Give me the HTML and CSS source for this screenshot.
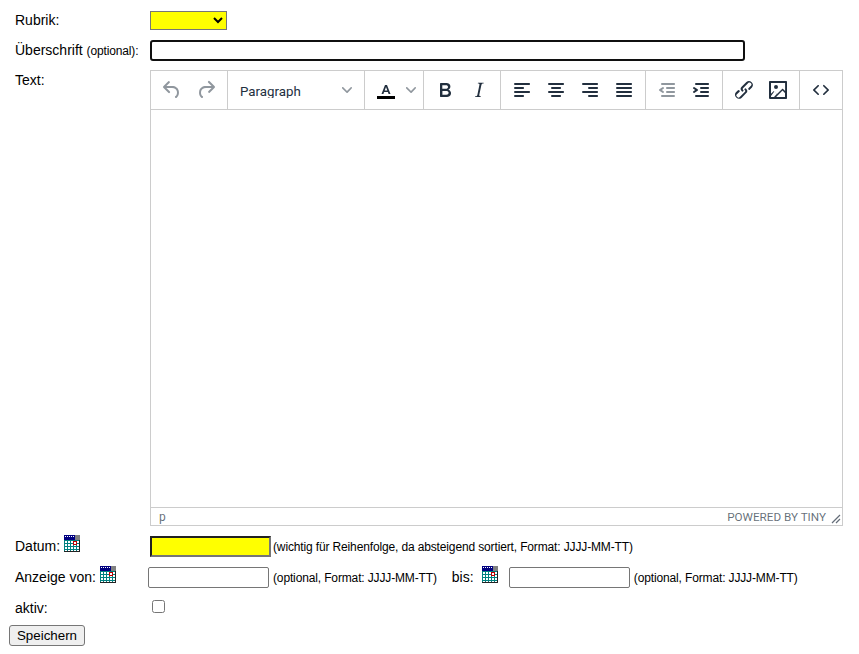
FILE: index.html
```html
<!DOCTYPE html>
<html lang="de">
<head>
<meta charset="utf-8">
<title>Artikel bearbeiten</title>
<link rel="stylesheet" href="styles.css">
</head>
<body>
<svg class="defs" width="0" height="0" aria-hidden="true">
  <symbol id="cal" viewBox="0 0 16 17" shape-rendering="crispEdges">
    <rect x="0" y="0" width="16" height="17" fill="#008080"/>
    <rect x="0" y="0" width="16" height="5" fill="#000080"/>
    <rect x="11" y="0" width="5" height="5" fill="#808080"/>
    <path d="M1 1h1v1H1zM3 1h1v1H3zM5 1h1v1H5zM7 1h1v1H7zM9 1h1v1H9z" fill="#fff"/>
    <path d="M1 6h2v2H1zM4 6h2v2H4zM7 6h2v2H7zM10 6h2v2h-2zM13 6h2v2h-2zM1 9h2v2H1zM4 9h2v2H4zM7 9h2v2H7zM10 9h2v2h-2zM13 9h2v2h-2zM1 12h2v2H1zM4 12h2v2H4zM7 12h2v2H7zM10 12h2v2h-2zM13 12h2v2h-2zM1 15h2v1H1zM4 15h2v1H4zM7 15h2v1H7zM10 15h2v1h-2zM13 15h2v1h-2z" fill="#fff"/>
    <path d="M9 6h4v4H9z" fill="#c00000"/>
    <path d="M10 7h2v2h-2z" fill="#fff"/>
    <path d="M15 5h1v12h-1zM0 16h16v1H0z" fill="#222"/>
  </symbol>
</svg>
<form class="form">
  <div class="row">
    <label class="label">Rubrik:</label>
    <select class="select"><option></option></select>
  </div>
  <div class="row">
    <label class="label">Überschrift <small class="small">(optional):</small></label>
    <input class="input-title" type="text">
  </div>
  <div class="row row-editor">
    <label class="label label-top">Text:</label>
    <div class="editor">
      <div class="toolbar">
        <div class="group">
          <span class="btn off"><svg viewBox="0 0 24 24"><path d="M6.4 8H12c3.7 0 6.2 2 6.8 5.1.6 2.7-.4 5.6-2.3 6.8a1 1 0 0 1-1-1.8c1.1-.6 1.8-2.7 1.4-4.6-.5-2.1-2.1-3.5-4.9-3.5H6.4l3.3 3.3a1 1 0 1 1-1.4 1.4l-5-5a1 1 0 0 1 0-1.4l5-5a1 1 0 0 1 1.4 1.4L6.4 8z"/></svg></span>
          <span class="btn off"><svg viewBox="0 0 24 24"><path d="M17.6 10H12c-2.8 0-4.4 1.4-4.9 3.5-.4 2 .3 4 1.4 4.6a1 1 0 1 1-1 1.8c-2-1.2-2.9-4.1-2.3-6.8.6-3 3-5.1 6.8-5.1h5.6l-3.3-3.3a1 1 0 1 1 1.4-1.4l5 5a1 1 0 0 1 0 1.4l-5 5a1 1 0 0 1-1.4-1.4l3.3-3.3z"/></svg></span>
        </div>
        <div class="group">
          <span class="format"><span class="format-text">Paragraph</span><svg class="chev" viewBox="0 0 10 10"><path d="M8.7 2.2c.3-.3.8-.3 1 0 .4.4.4.9 0 1.2L5.7 7.8c-.3.3-.9.3-1.2 0L.2 3.4a.8.8 0 0 1 0-1.2c.3-.3.8-.3 1.1 0L5 6l3.7-3.8z"/></svg></span>
        </div>
        <div class="group">
          <span class="split"><svg viewBox="0 0 24 24"><path fill-rule="evenodd" d="M7.5 16 11 7h2l3.5 9h-1.9l-.7-2h-3.8l-.7 2H7.5zm3.2-3.6h2.6L12 8.9l-1.3 3.5z"/><path class="black" d="M3 18h18v3H3z"/></svg><svg class="chev" viewBox="0 0 10 10"><path d="M8.7 2.2c.3-.3.8-.3 1 0 .4.4.4.9 0 1.2L5.7 7.8c-.3.3-.9.3-1.2 0L.2 3.4a.8.8 0 0 1 0-1.2c.3-.3.8-.3 1.1 0L5 6l3.7-3.8z"/></svg></span>
        </div>
        <div class="group">
          <span class="btn"><svg viewBox="0 0 24 24"><path d="M7.8 19c-.3 0-.5 0-.6-.2l-.2-.5V5.7c0-.2 0-.4.2-.5l.6-.2h5c1.5 0 2.7.3 3.5 1 .7.6 1.1 1.4 1.1 2.5a3 3 0 0 1-.6 1.9c-.4.6-1 1-1.6 1.2.4.1.9.3 1.3.6s.8.7 1 1.2c.4.4.5 1 .5 1.6 0 1.3-.4 2.3-1.3 3-.8.7-2.1 1-3.8 1H7.8zm5-8.3c.6 0 1.2-.1 1.6-.5.4-.3.6-.7.6-1.3 0-1.1-.8-1.7-2.3-1.7H9.3v3.5h3.4zm.5 6c.7 0 1.3-.1 1.7-.4.4-.4.6-.9.6-1.5s-.2-1-.7-1.4c-.4-.3-1-.4-2-.4H9.4v3.8h4z"/></svg></span>
          <span class="btn"><svg viewBox="0 0 24 24"><path d="M16.7 4.7l-.1.9h-.3c-.6 0-1 0-1.4.3-.3.3-.4.6-.5 1.1l-2.1 9.8v.6c0 .5.4.8 1.4.8h.2l-.2.8H8l.2-.8h.2c1.1 0 1.8-.5 2-1.5l2-9.8.1-.5c0-.6-.4-.8-1.4-.8h-.3l.2-.9h5.8z"/></svg></span>
        </div>
        <div class="group">
          <span class="btn"><svg viewBox="0 0 24 24"><path d="M5 5h14c.6 0 1 .4 1 1s-.4 1-1 1H5a1 1 0 1 1 0-2zm0 4h8c.6 0 1 .4 1 1s-.4 1-1 1H5a1 1 0 1 1 0-2zm0 8h8c.6 0 1 .4 1 1s-.4 1-1 1H5a1 1 0 0 1 0-2zm0-4h14c.6 0 1 .4 1 1s-.4 1-1 1H5a1 1 0 0 1 0-2z"/></svg></span>
          <span class="btn"><svg viewBox="0 0 24 24"><path d="M5 5h14c.6 0 1 .4 1 1s-.4 1-1 1H5a1 1 0 1 1 0-2zm3 4h8c.6 0 1 .4 1 1s-.4 1-1 1H8a1 1 0 1 1 0-2zm0 8h8c.6 0 1 .4 1 1s-.4 1-1 1H8a1 1 0 0 1 0-2zm-3-4h14c.6 0 1 .4 1 1s-.4 1-1 1H5a1 1 0 0 1 0-2z"/></svg></span>
          <span class="btn"><svg viewBox="0 0 24 24"><path d="M5 5h14c.6 0 1 .4 1 1s-.4 1-1 1H5a1 1 0 1 1 0-2zm6 4h8c.6 0 1 .4 1 1s-.4 1-1 1h-8a1 1 0 0 1 0-2zm0 8h8c.6 0 1 .4 1 1s-.4 1-1 1h-8a1 1 0 0 1 0-2zm-6-4h14c.6 0 1 .4 1 1s-.4 1-1 1H5a1 1 0 0 1 0-2z"/></svg></span>
          <span class="btn"><svg viewBox="0 0 24 24"><path d="M5 5h14c.6 0 1 .4 1 1s-.4 1-1 1H5a1 1 0 1 1 0-2zm0 4h14c.6 0 1 .4 1 1s-.4 1-1 1H5a1 1 0 1 1 0-2zm0 4h14c.6 0 1 .4 1 1s-.4 1-1 1H5a1 1 0 0 1 0-2zm0 4h14c.6 0 1 .4 1 1s-.4 1-1 1H5a1 1 0 0 1 0-2z"/></svg></span>
        </div>
        <div class="group">
          <span class="btn off"><svg viewBox="0 0 24 24"><path d="M7 5h12c.6 0 1 .4 1 1s-.4 1-1 1H7a1 1 0 1 1 0-2zm5 4h7c.6 0 1 .4 1 1s-.4 1-1 1h-7a1 1 0 0 1 0-2zm0 4h7c.6 0 1 .4 1 1s-.4 1-1 1h-7a1 1 0 0 1 0-2zm-5 4h12a1 1 0 0 1 0 2H7a1 1 0 0 1 0-2zm1.6-3.8a1 1 0 0 1-1.2 1.6l-3-2a1 1 0 0 1 0-1.6l3-2a1 1 0 0 1 1.2 1.6L6.8 12l1.8 1.2z"/></svg></span>
          <span class="btn"><svg viewBox="0 0 24 24"><path d="M7 5h12c.6 0 1 .4 1 1s-.4 1-1 1H7a1 1 0 1 1 0-2zm5 4h7c.6 0 1 .4 1 1s-.4 1-1 1h-7a1 1 0 0 1 0-2zm0 4h7c.6 0 1 .4 1 1s-.4 1-1 1h-7a1 1 0 0 1 0-2zm-5 4h12a1 1 0 0 1 0 2H7a1 1 0 0 1 0-2zm-2.6-3.8L6.2 12l-1.8-1.2a1 1 0 0 1 1.2-1.6l3 2a1 1 0 0 1 0 1.6l-3 2a1 1 0 1 1-1.2-1.6z"/></svg></span>
        </div>
        <div class="group">
          <span class="btn"><svg viewBox="0 0 24 24"><path d="M6.2 12.3a1 1 0 0 1 1.4 1.4l-2.1 2a2 2 0 1 0 2.7 2.8l4.8-4.8a1 1 0 0 0 0-1.4 1 1 0 1 1 1.3-1.4 3 3 0 0 1 0 4.2l-4.8 4.8a4 4 0 0 1-5.6-5.6l2.1-2zm11.6-.6a1 1 0 0 1-1.4-1.4l2-2a2 2 0 1 0-2.6-2.8L11 10.3a1 1 0 0 0 0 1.4A1 1 0 1 1 9.6 13a3 3 0 0 1 0-4.2l4.8-4.8a4 4 0 0 1 5.6 5.6l-2.1 2z"/></svg></span>
          <span class="btn"><svg viewBox="0 0 24 24"><path d="M5 15.7l2.3-2.2c.3-.3.7-.3 1 0L11 16l5.1-5c.3-.4.8-.4 1 0l2 1.9V5H5v10.7zM5 18V19h3l2.8-2.9-2.5-2.5L5 18zm14-3l-2.5-2.4-6.4 6.5H19v-4zM4 3h16c.6 0 1 .4 1 1v16c0 .6-.4 1-1 1H4a1 1 0 0 1-1-1V4c0-.6.4-1 1-1zm6 8a2 2 0 1 0 0-4 2 2 0 0 0 0 4z" fill-rule="evenodd"/></svg></span>
        </div>
        <div class="group group-last">
          <span class="btn"><svg viewBox="0 0 24 24"><path d="M9.8 15.7c.3.3.3.8 0 1-.3.4-.9.4-1.2 0l-4.4-4.1a.8.8 0 0 1 0-1.2l4.4-4.2c.3-.3.9-.3 1.2 0 .3.3.3.8 0 1.1L6 12l3.8 3.7zM14.2 15.7c-.3.3-.3.8 0 1 .4.4.9.4 1.2 0l4.4-4.1c.3-.3.3-.9 0-1.2l-4.4-4.2a.8.8 0 0 0-1.2 0c-.3.3-.3.8 0 1.1L18 12l-3.8 3.7z"/></svg></span>
        </div>
      </div>
      <div class="edit-area"></div>
      <div class="statusbar">
        <span class="path">p</span>
        <span class="brand">Powered by Tiny</span>
        <svg class="grip" viewBox="0 0 10 10"><path d="M9 1 1 9M9 5 5 9" /></svg>
      </div>
    </div>
  </div>
  <div class="row">
    <label class="label">Datum: <svg class="cal"><use href="#cal"/></svg></label>
    <input class="input-date required" type="text">
    <span class="note note-first">(wichtig für Reihenfolge, da absteigend sortiert, Format: JJJJ-MM-TT)</span>
  </div>
  <div class="row">
    <label class="label label-short">Anzeige von: <svg class="cal"><use href="#cal"/></svg></label>
    <input class="input-date" type="text">
    <span class="note">(optional, Format: JJJJ-MM-TT)</span>
    <label class="bis">bis: <svg class="cal cal-bis"><use href="#cal"/></svg></label>
    <input class="input-date" type="text">
    <span class="note">(optional, Format: JJJJ-MM-TT)</span>
  </div>
  <div class="row row-active">
    <label class="label label-active">aktiv:</label>
    <input class="check" type="checkbox">
  </div>
  <div class="row-submit">
    <button class="save" type="button">Speichern</button>
  </div>
</form>
</body>
</html>
```

FILE: styles.css
```css
html, body {
  margin: 0;
  padding: 0;
  background: #fff;
}
body {
  font-family: "Liberation Sans", Arial, sans-serif;
  font-size: 14px;
  line-height: 16px;
  color: #000;
}
.defs {
  position: absolute;
}
.form {
  display: flex;
  flex-direction: column;
  gap: 10px;
  padding: 11px 16px 0 15px;
}
.row {
  display: flex;
  align-items: center;
}
.label {
  flex: none;
  width: 135px;
  padding-bottom: 1px;
  white-space: nowrap;
}
.label-short {
  width: 133px;
}
.label-top {
  align-self: flex-start;
  padding-bottom: 0;
  line-height: 20px;
}
.label-active {
  padding: 3px 0 0;
}
.small {
  font-size: 12px;
  letter-spacing: -0.14px;
}
.select {
  width: 77px;
  height: 19px;
  padding: 0;
  background-color: #ff0;
  border: 1px solid #767676;
  border-radius: 0;
  font: 13.33px "Liberation Sans", Arial, sans-serif;
}
.input-title {
  box-sizing: border-box;
  width: 595px;
  height: 21px;
  padding: 1px 2px;
  border: 2px solid #101010;
  border-radius: 3px;
  outline: none;
}
.input-date {
  box-sizing: border-box;
  flex: none;
  width: 121px;
  height: 21px;
  padding: 1px 2px;
  border: 1px solid #767676;
  border-radius: 2px;
  background: #fff;
}
.input-date.required {
  border: 2px inset #767676;
  border-radius: 0;
  background: #ff0;
}
.note {
  margin-left: 4px;
  font-size: 12px;
  letter-spacing: -0.14px;
  white-space: nowrap;
}
.note-first {
  margin-left: 2px;
}
.bis {
  flex: none;
  width: 57px;
  margin-left: 15px;
  padding-bottom: 1px;
  white-space: nowrap;
}
.cal {
  display: inline-block;
  width: 16px;
  height: 17px;
  margin-top: -6px;
  vertical-align: -1px;
}
.cal-bis {
  margin-left: 4px;
}
.check {
  width: 13px;
  height: 13px;
  margin: 0 0 0 2px;
}
.row-editor {
  margin-top: -1px;
}
.row-active {
  margin-top: -2px;
  min-height: 21px;
}
.row-submit {
  margin: -2px 0 0 -6px;
}
.save {
  box-sizing: border-box;
  width: 76px;
  height: 21px;
  padding: 1px 6px;
  font: 13.33px "Liberation Sans", Arial, sans-serif;
  color: #000;
  background: #efefef;
  border: 1px solid #767676;
  border-radius: 3px;
}

/* editor */
.editor {
  box-sizing: border-box;
  display: flex;
  flex-direction: column;
  width: 693px;
  height: 456px;
  border: 1px solid #ccc;
  font-family: Roboto, "Open Sans", sans-serif;
  color: #222f3e;
}
.toolbar {
  display: flex;
  flex: none;
  height: 38px;
  border-bottom: 1px solid #ccc;
}
.group {
  display: flex;
  align-items: center;
  padding: 0 4px;
  border-right: 1px solid #ccc;
}
.group-last {
  border-right: 0;
}
.btn {
  display: flex;
  align-items: center;
  justify-content: center;
  width: 34px;
  height: 34px;
  fill: #222f3e;
}
.btn svg {
  width: 24px;
  height: 24px;
}
.btn.off {
  fill: rgba(34, 47, 62, 0.5);
}
.format {
  box-sizing: border-box;
  display: flex;
  align-items: center;
  justify-content: space-between;
  width: 128px;
  height: 34px;
  padding: 0 8px;
  font-size: 13.3px;
}
.format-text {
  display: block;
  height: 16px;
  line-height: 20px;
  overflow: hidden;
}
.chev {
  width: 10px;
  height: 10px;
  fill: rgba(34, 47, 62, 0.5);
}
.split {
  display: flex;
  align-items: center;
  width: 50px;
  height: 34px;
  fill: #222f3e;
}
.split > svg:first-child {
  width: 24px;
  height: 24px;
  margin-left: 5px;
  margin-right: 8px;
}
.black {
  fill: #000;
}
.edit-area {
  flex: 1;
  background: #fff;
}
.statusbar {
  display: flex;
  flex: none;
  align-items: center;
  height: 17px;
  padding: 0 1px 0 8px;
  border-top: 1px solid #ccc;
  font-size: 12px;
  color: rgba(34, 47, 62, 0.7);
}
.path {
  flex: 1;
}
.brand {
  font-size: 11.7px;
  text-transform: uppercase;
}
.grip {
  width: 10px;
  height: 10px;
  margin: 4px 0 0 5px;
  fill: none;
  stroke: rgba(34, 47, 62, 0.7);
  stroke-width: 1.2;
}
```
